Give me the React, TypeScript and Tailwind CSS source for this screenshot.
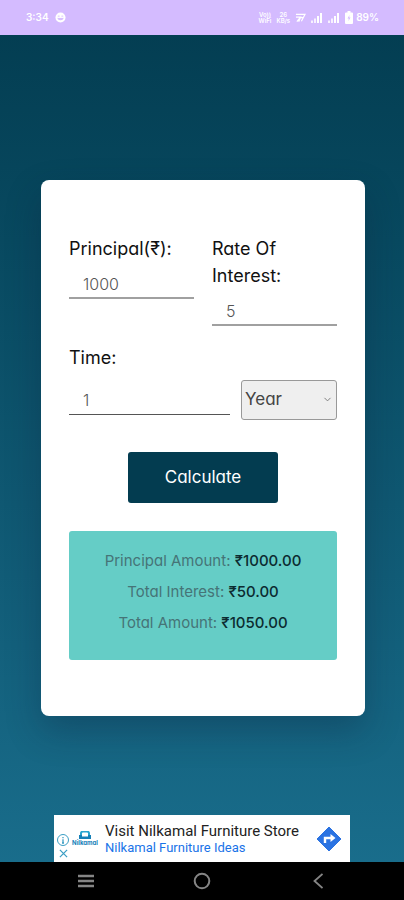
import { useState } from "react";
import { ChevronDown } from "lucide-react";

type Unit = "year" | "month" | "day";

const UNITS: { value: Unit; label: string; perYear: number }[] = [
    { value: "year", label: "Year", perYear: 1 },
    { value: "month", label: "Month", perYear: 12 },
    { value: "day", label: "Day", perYear: 365 },
];

function SignalIcon() {
    return (
        <svg viewBox="0 0 12 11" className="h-[11px] w-3" fill="currentColor" aria-hidden="true">
            <path d="M0 8.500h2V11H0zM3 6.500h2V11H3z" opacity="0.8" />
            <path d="M6 4h2v7H6zM9 1h2v10H9z" />
        </svg>
    );
}

function StatusBar() {
    return (
        <header className="flex h-[35px] items-center justify-between bg-[#d4bbff] pl-[26px] pr-[25px] text-[10px] font-semibold text-white">
            <div className="flex items-center gap-1.5">
                <span>3:34</span>
                <svg viewBox="0 0 12 12" className="h-[11px] w-[11px]" aria-hidden="true">
                    <circle cx="6" cy="6" r="5.500" fill="white" />
                    <path d="M3 4.500h2M7 4.500h2M3 7c1 2 5 2 6 0z" stroke="#d4bbff" fill="#d4bbff" />
                </svg>
            </div>
            <div className="flex items-center gap-[5px]">
                <span className="flex flex-col items-center text-[6px] leading-[6px]">
                    <span>Vo))</span>
                    <span>WiFi</span>
                </span>
                <span className="flex flex-col items-center text-[6px] leading-[6px]">
                    <span>26</span>
                    <span>KB/s</span>
                </span>
                <svg viewBox="0 0 12 11" className="h-2.5 w-[11px]" fill="none" stroke="currentColor" strokeWidth="1.300" aria-hidden="true">
                    <path d="M1 1.500h10L7 9M1 4.500h5L2 9.500M9 5H6L4 9.500" />
                </svg>
                <SignalIcon />
                <SignalIcon />
                <div className="flex items-center gap-[3px]">
                    <svg viewBox="0 0 8 13" className="h-[13px] w-2" aria-hidden="true">
                        <path d="M2.500 0h3v1.500H7a1 1 0 0 1 1 1V12a1 1 0 0 1-1 1H1a1 1 0 0 1-1-1V2.500a1 1 0 0 1 1-1h1.500z" fill="white" />
                        <path d="M4.500 4L2.500 7.500h1.300L3.500 10l2-3.500H4.200z" fill="#d4bbff" />
                    </svg>
                    <span>89%</span>
                </div>
            </div>
        </header>
    );
}

function ResultLine({ label, amount }: { label: string; amount: number }) {
    return (
        <p>
            {label}: <strong className="font-medium text-[#0c2b30]">₹{amount.toFixed(2)}</strong>
        </p>
    );
}

function Calculator() {
    const [principal, setPrincipal] = useState("1000");
    const [rate, setRate] = useState("5");
    const [time, setTime] = useState("1");
    const [unit, setUnit] = useState<Unit>("year");
    const [result, setResult] = useState({ principal: 1000, interest: 50 });

    const calculate = () => {
        const p = Number(principal);
        const perYear = UNITS.find((u) => u.value === unit)!.perYear;
        setResult({ principal: p, interest: (p * Number(rate) * Number(time)) / perYear / 100 });
    };

    return (
        <form
            className="w-full rounded-lg bg-white px-7 pt-[55px] pb-14 shadow-[0_15px_35px_rgba(12,30,55,0.3)]"
            onSubmit={(e) => {
                e.preventDefault();
                calculate();
            }}
        >
            <div className="grid grid-cols-2 items-start gap-[18px]">
                <div>
                    <label htmlFor="principal" className="block text-lg leading-[27px] text-[#111]">
                        Principal(₹):
                    </label>
                    <input
                        id="principal"
                        inputMode="decimal"
                        value={principal}
                        onChange={(e) => setPrincipal(e.target.value)}
                        className="block h-[37px] w-full border-b-2 border-[#a0a0a0] px-3.5 pt-2 font-light text-[#555] outline-none"
                    />
                </div>
                <div>
                    <label htmlFor="rate" className="block text-lg leading-[27px] text-[#111]">
                        Rate Of Interest:
                    </label>
                    <input
                        id="rate"
                        inputMode="decimal"
                        value={rate}
                        onChange={(e) => setRate(e.target.value)}
                        className="block h-[37px] w-full border-b-2 border-[#a0a0a0] px-3.5 pt-2 font-light text-[#555] outline-none"
                    />
                </div>
            </div>

            <label htmlFor="time" className="mt-[18px] block text-lg leading-[27px] text-[#111]">
                Time:
            </label>
            <div className="mt-[9px] flex items-start gap-[11px]">
                <input
                    id="time"
                    inputMode="decimal"
                    value={time}
                    onChange={(e) => setTime(e.target.value)}
                    className="h-[35px] min-w-0 flex-1 border-b border-[#555] px-3.5 pt-1.5 font-light text-[#555] outline-none"
                />
                <div className="relative">
                    <select
                        aria-label="Time unit"
                        value={unit}
                        onChange={(e) => setUnit(e.target.value as Unit)}
                        className="h-10 w-24 appearance-none rounded-[3px] border border-[#999] bg-[#efefef] pl-[3px] text-[17px] text-[#444] outline-none"
                    >
                        {UNITS.map((u) => (
                            <option key={u.value} value={u.value}>
                                {u.label}
                            </option>
                        ))}
                    </select>
                    <ChevronDown size={11} className="pointer-events-none absolute top-3.5 right-1 text-[#777]" />
                </div>
            </div>

            <button
                type="submit"
                className="mx-auto mt-8 block h-[51px] w-[150px] rounded-[3px] bg-[#033c50] text-[17px] text-white"
            >
                Calculate
            </button>

            <div className="mt-7 rounded-[3px] bg-[#65cdc6] pt-3.5 pb-[22px] text-center text-[15px] leading-[31px] text-[#467477]">
                <ResultLine label="Principal Amount" amount={result.principal} />
                <ResultLine label="Total Interest" amount={result.interest} />
                <ResultLine label="Total Amount" amount={result.principal + result.interest} />
            </div>
        </form>
    );
}

function AdBanner() {
    return (
        <aside className="mx-[54px] flex h-[47px] items-center bg-white pl-[3px] pr-2">
            <div className="flex flex-col items-center gap-[3px] self-end pb-1 text-[#3b9ec4]">
                <button type="button" aria-label="Ad info">
                    <svg viewBox="0 0 12 12" className="h-3 w-3" fill="none" stroke="currentColor" aria-hidden="true">
                        <circle cx="6" cy="6" r="5.500" />
                        <path d="M6 3v1.300M6 5.300V9M5 9h2" strokeWidth="1.300" />
                    </svg>
                </button>
                <button type="button" aria-label="Close ad">
                    <svg viewBox="0 0 10 10" className="h-[9px] w-[9px]" fill="none" stroke="currentColor" strokeWidth="1.400" aria-hidden="true">
                        <path d="M1 1l8 8M9 1L1 9" />
                    </svg>
                </button>
            </div>
            <div className="ml-1 flex w-6 flex-col items-center text-[#1580b8]">
                <svg viewBox="0 0 12 8" className="h-2 w-3" aria-hidden="true">
                    <path d="M2 4V2a2 2 0 0 1 2-1.500h4A2 2 0 0 1 10 2v2" fill="none" stroke="#2aa5d0" strokeWidth="2" />
                    <path d="M0 4h3v1.500h6V4h3v4H0z" fill="#1580b8" />
                </svg>
                <span className="text-[6px] leading-[7px] font-bold">Nilkamal</span>
            </div>
            <div className="ml-2 min-w-0 flex-1 font-[Roboto,sans-serif] whitespace-nowrap">
                <p className="text-[15px] leading-[18px] text-[#222]">Visit Nilkamal Furniture Store</p>
                <a href="#ideas" className="block text-[13px] leading-4 text-[#1a73e8]">
                    Nilkamal Furniture Ideas
                </a>
            </div>
            <svg viewBox="0 0 26 26" className="h-[26px] w-[26px] shrink-0" aria-hidden="true">
                <path d="M13 1L25 13L13 25L1 13z" fill="#2b73e2" stroke="#2b73e2" strokeLinejoin="round" />
                <path d="M9 17v-5h6" fill="none" stroke="white" strokeWidth="2.400" />
                <path d="M14.500 8l5 4-5 4z" fill="white" />
            </svg>
        </aside>
    );
}

function NavBar() {
    return (
        <nav className="grid h-[38px] grid-cols-[1fr_60px_1fr] items-center bg-black text-[#858585]">
            <button type="button" aria-label="Recent apps" className="flex justify-center">
                <svg viewBox="0 0 16 14" className="h-3.5 w-4" fill="none" stroke="currentColor" strokeWidth="2.400" aria-hidden="true">
                    <path d="M0 2h16M0 7h16M0 12h16" />
                </svg>
            </button>
            <button type="button" aria-label="Home" className="flex justify-center">
                <svg viewBox="0 0 18 18" className="h-[18px] w-[18px]" fill="none" stroke="currentColor" strokeWidth="2" aria-hidden="true">
                    <circle cx="9" cy="9" r="7.300" />
                </svg>
            </button>
            <button type="button" aria-label="Back" className="flex justify-center">
                <svg viewBox="0 0 10 16" className="h-4 w-2.5" fill="none" stroke="currentColor" strokeWidth="1.800" aria-hidden="true">
                    <path d="M9.500 1L1.500 8l8 7" />
                </svg>
            </button>
        </nav>
    );
}

export default function App() {
    return (
        <div className="flex min-h-screen flex-col bg-linear-to-b from-[#033c50] to-[#1a6f8e] font-[Inter,sans-serif] [font-feature-settings:'cv11']">
            <StatusBar />
            <main className="flex flex-1 items-center pt-[46px] pr-[39px] pl-[41px]">
                <Calculator />
            </main>
            <AdBanner />
            <NavBar />
        </div>
    );
}
